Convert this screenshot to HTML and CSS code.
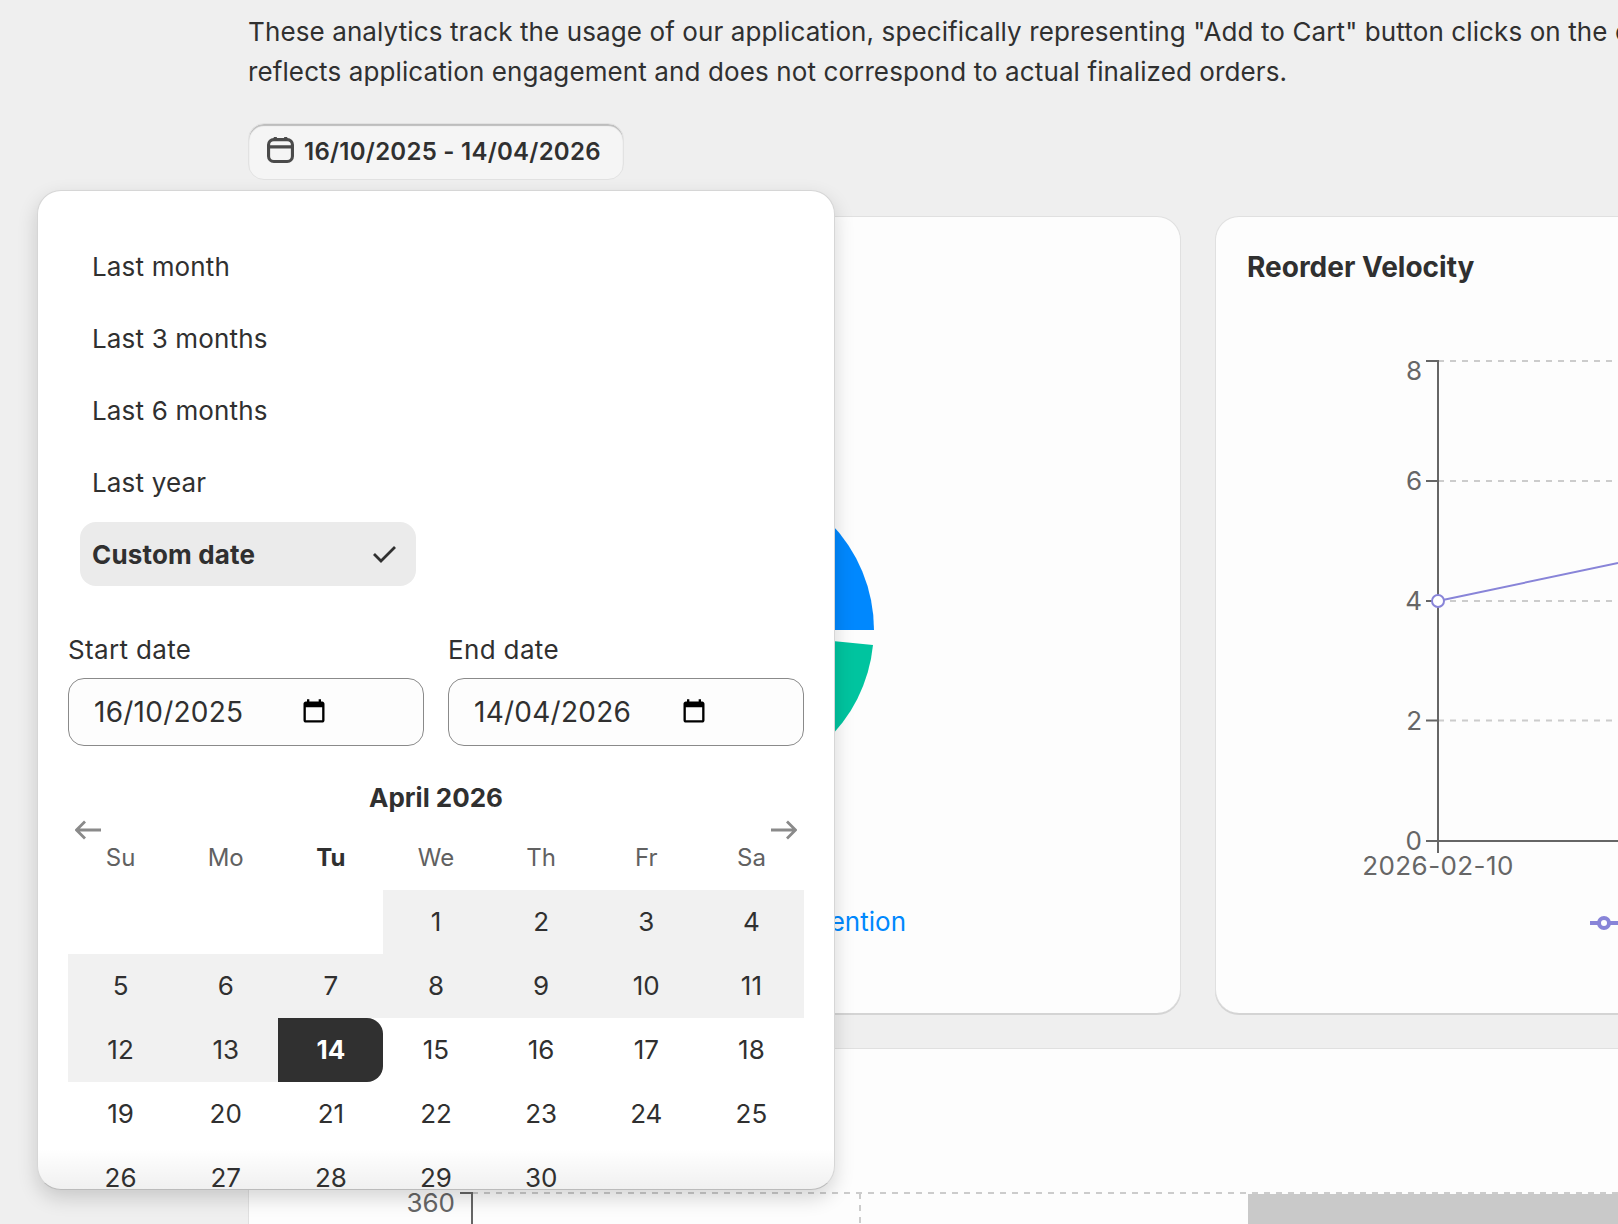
FILE: index.html
```html
<!DOCTYPE html>
<html lang="en">
<head>
<meta charset="utf-8">
<title>Analytics</title>
<link rel="stylesheet" href="styles.css">
</head>
<body>
<main class="main">
  <p class="intro">These analytics track the usage of our application, specifically representing "Add to Cart" button clicks on the cart page. This data<br>reflects application engagement and does not correspond to actual finalized orders.</p>
  <button class="range-btn" type="button">
    <svg class="range-icon" viewBox="0 0 26 26" fill="none" stroke="#4a4a4a" stroke-width="3"><rect x="1.5" y="3.5" width="23" height="21" rx="5"/><path d="M2 10.5h22M8 1v3M18 1v3"/></svg>
    <span>16/10/2025 - 14/04/2026</span>
  </button>
  <section class="cards">
    <article class="card">
      <svg class="chart" width="869" height="700" viewBox="280 300 869 700">
        <path class="slice-blue" d="M721 630L721 477A153 153 0 0 1 874 630Z"/>
        <path class="slice-green" d="M721 630L873 645A153 153 0 0 1 721 783Z"/>
        <text class="legend-blue" x="906" y="931" text-anchor="end">Retention</text>
      </svg>
    </article>
    <article class="card">
      <h2 class="card-title">Reorder Velocity</h2>
      <svg class="chart chart-line" width="869" height="700" viewBox="1247 300 869 700">
        <path class="grid-line" d="M1438 361H2100M1438 481H2100M1438 601H2100M1438 720.500H2100"/>
        <path class="axis" d="M1426 361H1438V853M1426 481H1438M1426 601H1438M1426 720.500H1438M1426 841H2100"/>
        <text class="tick" x="1422" y="380" text-anchor="end">8</text>
        <text class="tick" x="1422" y="490" text-anchor="end">6</text>
        <text class="tick" x="1422" y="610" text-anchor="end">4</text>
        <text class="tick" x="1422" y="730" text-anchor="end">2</text>
        <text class="tick" x="1422" y="850" text-anchor="end">0</text>
        <text class="tick tick-date" x="1438" y="875" text-anchor="middle">2026-02-10</text>
        <path class="series" d="M1438 601L1618 563"/>
        <circle class="dot" cx="1438" cy="601" r="6"/>
        <path class="legend-line" d="M1590 923H1640"/>
        <circle class="dot legend-dot" cx="1604" cy="923" r="5"/>
      </svg>
    </article>
  </section>
  <section class="panel">
    <svg class="chart" width="1900" height="60" viewBox="249 1190 1900 60">
      <path class="grid-line" d="M472 1193H2100M860 1193V1250"/>
      <rect class="bar" x="1248" y="1194" width="500" height="60"/>
      <path class="axis" d="M460 1193H472V1250"/>
      <text class="tick" x="455" y="1212" text-anchor="end">360</text>
    </svg>
  </section>
</main>

<aside class="popover">
  <ul class="presets">
    <li class="preset">Last month</li>
    <li class="preset">Last 3 months</li>
    <li class="preset">Last 6 months</li>
    <li class="preset">Last year</li>
    <li class="preset is-selected">Custom date
      <svg class="check" viewBox="0 0 24 18" fill="none" stroke="#303030" stroke-width="2.800"><path d="M2 9l7 7L23 2"/></svg>
    </li>
  </ul>
  <div class="dates">
    <div class="field">
      <label class="field-label">Start date</label>
      <div class="date-input"><span class="date-text">16/10/2025</span>
        <svg class="picker" viewBox="0 0 24 24"><path d="M19 3h-1V1h-2v2H8V1H6v2H5c-1.100 0-2 .9-2 2v14c0 1.100.9 2 2 2h14c1.100 0 2-.9 2-2V5c0-1.100-.9-2-2-2zm0 16H5V8h14v11z"/></svg>
      </div>
    </div>
    <div class="field">
      <label class="field-label">End date</label>
      <div class="date-input"><span class="date-text">14/04/2026</span>
        <svg class="picker" viewBox="0 0 24 24"><path d="M19 3h-1V1h-2v2H8V1H6v2H5c-1.100 0-2 .9-2 2v14c0 1.100.9 2 2 2h14c1.100 0 2-.9 2-2V5c0-1.100-.9-2-2-2zm0 16H5V8h14v11z"/></svg>
      </div>
    </div>
  </div>
  <div class="calendar">
    <svg class="nav nav-prev" viewBox="0 0 26 20" fill="none" stroke="#8a8a8a" stroke-width="2.800"><path d="M26 10H2M10 1.500L1.500 10l8.500 8.500"/></svg>
    <svg class="nav nav-next" viewBox="0 0 26 20" fill="none" stroke="#8a8a8a" stroke-width="2.800"><path d="M0 10h24M16 1.500l8.500 8.500-8.500 8.500"/></svg>
    <h3 class="month">April 2026</h3>
    <div class="days">
      <div class="wd">Su</div><div class="wd">Mo</div><div class="wd wd-today">Tu</div><div class="wd">We</div><div class="wd">Th</div><div class="wd">Fr</div><div class="wd">Sa</div>
      <div></div><div></div><div></div>
      <div class="day in-range">1</div><div class="day in-range">2</div><div class="day in-range">3</div><div class="day in-range">4</div>
      <div class="day in-range">5</div><div class="day in-range">6</div><div class="day in-range">7</div><div class="day in-range">8</div><div class="day in-range">9</div><div class="day in-range">10</div><div class="day in-range">11</div>
      <div class="day in-range">12</div><div class="day in-range">13</div><div class="day range-end">14</div><div class="day">15</div><div class="day">16</div><div class="day">17</div><div class="day">18</div>
      <div class="day">19</div><div class="day">20</div><div class="day">21</div><div class="day">22</div><div class="day">23</div><div class="day">24</div><div class="day">25</div>
      <div class="day">26</div><div class="day">27</div><div class="day">28</div><div class="day">29</div><div class="day">30</div>
    </div>
  </div>
</aside>
</body>
</html>
```
FILE: styles.css
```css
* { box-sizing: border-box; }
html, body { margin: 0; height: 1224px; overflow: hidden; }
body {
  background: #efefef;
  color: #303030;
  font-family: "Inter", "Liberation Sans", sans-serif;
  font-size: 26px;
  position: relative;
  width: 1618px;
}
.main { width: 1900px; padding: 12px 0 0 248px; }
.intro { margin: 0 0 31px; line-height: 40px; white-space: nowrap; letter-spacing: .11px; }
.range-btn {
  display: flex;
  align-items: center;
  gap: 10px;
  width: 376px;
  height: 57px;
  padding: 0 0 1px 18px;
  font: 600 24px "Inter", sans-serif;
  letter-spacing: .25px;
  color: #303030;
  background: #f5f5f5;
  border: 1px solid #e2e2e2;
  border-radius: 16px;
  box-shadow: inset 0 2px 1px #bdbdbd;
}
.range-icon { width: 27px; height: 27px; flex: none; margin-bottom: 3px; }
.cards {
  display: grid;
  grid-template-columns: 933px 933px;
  gap: 34px;
  margin-top: 36px;
}
.card, .panel {
  background: #fdfdfd;
  border: 1px solid #e0e0e0;
  box-shadow: 0 2px 0 #d4d4d4;
}
.card { height: 797px; border-radius: 24px; padding: 31px; border-bottom-width: 0; }
.card-title { margin: 0; font-size: 28px; line-height: 38px; font-weight: 650; }
.chart { display: block; overflow: visible; }
.card > .chart:first-child { margin-top: 52px; }
.chart-line { margin-top: 14px; }
.panel { margin-top: 35px; height: 260px; padding-top: 141px; box-shadow: none; }
.slice-blue { fill: #0088fe; }
.slice-green { fill: #00c49f; }
.legend-blue { fill: #0088fe; font-size: 26px; }
.grid-line { fill: none; stroke: #ccc; stroke-width: 2; stroke-dasharray: 6 6; }
.axis { fill: none; stroke: #666; stroke-width: 2; }
.tick { fill: #666; font-size: 26px; }
.tick-date { letter-spacing: .4px; }
.series { fill: none; stroke: #8884d8; stroke-width: 2; }
.dot { fill: #fff; stroke: #8884d8; stroke-width: 2; }
.legend-line { stroke: #8884d8; stroke-width: 4; }
.legend-dot { stroke-width: 4; }
.bar { fill: #c9c9c9; }

.popover {
  position: absolute;
  left: 37px;
  top: 190px;
  width: 798px;
  height: 1000px;
  overflow: hidden;
  background: #fff;
  border: 1px solid #d6d6d6;
  border-bottom-color: #bbb;
  border-radius: 24px;
  box-shadow: 0 8px 20px rgba(0, 0, 0, .16);
}
.popover::after {
  content: "";
  position: absolute;
  left: 0;
  right: 0;
  bottom: 0;
  height: 40px;
  z-index: 0;
  background: linear-gradient(rgba(0, 0, 0, 0), rgba(0, 0, 0, .06));
}
.presets {
  list-style: none;
  margin: 43px 0 0 42px;
  padding: 0;
  width: 336px;
  display: flex;
  flex-direction: column;
  gap: 8px;
  letter-spacing: .16px;
}
.preset {
  height: 64px;
  padding: 0 12px;
  display: flex;
  align-items: center;
  justify-content: space-between;
  border-radius: 16px;
}
.is-selected { background: #ebebeb; font-weight: 650; }
.check { width: 24px; height: 18px; margin-right: 8px; }
.dates {
  display: grid;
  grid-template-columns: 356px 356px;
  gap: 24px;
  margin: 48px 0 0 30px;
}
.field-label { display: block; line-height: 32px; margin-bottom: 12px; letter-spacing: .35px; }
.date-input {
  height: 68px;
  display: flex;
  align-items: center;
  padding-left: 25px;
  background: #fdfdfd;
  border: 1px solid #8a8a8a;
  border-radius: 16px;
}
.date-text { font-size: 28px; letter-spacing: .25px; width: 206px; }
.picker { width: 28px; height: 28px; fill: #000; }
.calendar { position: relative; z-index: 1; margin: 33px 30px 0; }
.month { margin: 0 0 8px; text-align: center; font-size: 26px; line-height: 38px; font-weight: 650; }
.nav { position: absolute; top: 41px; width: 26px; height: 20px; }
.nav-prev { left: 7px; }
.nav-next { right: 7px; }
.days { display: grid; grid-template-columns: repeat(7, 1fr); grid-template-rows: 65px; grid-auto-rows: 64px; }
.wd { display: flex; align-items: center; justify-content: center; color: #616161; font-size: 24px; }
.wd-today { color: #303030; font-weight: 700; }
.day { display: flex; align-items: center; justify-content: center; font-size: 26px; padding-bottom: 2px; }
.in-range { background: #f1f1f1; }
.range-end { background: #303030; color: #fff; font-weight: 700; border-radius: 0 16px 16px 0; }
```
